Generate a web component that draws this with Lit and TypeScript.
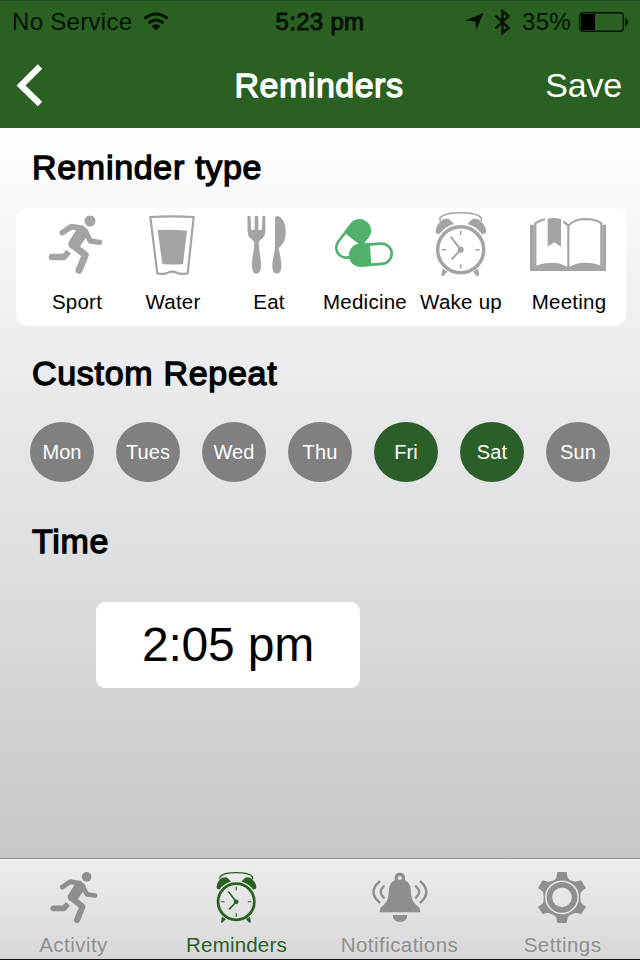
import { LitElement, html, svg, css } from "lit";
import { customElement, state } from "lit/decorators.js";

const runner = svg`
  <circle cx="240" cy="63" r="16.5" fill="currentColor"/>
  <path d="M157 98 L184 80 L216 85" fill="none" stroke="currentColor" stroke-width="17" stroke-linecap="round" stroke-linejoin="round"/>
  <path d="M206 77 Q226 79 235 90 Q238 98 232 107 L211 138 L182 146 Q172 136 176 126 L195 96 Z" fill="currentColor"/>
  <path d="M228 98 L241 123 L269 127" fill="none" stroke="currentColor" stroke-width="16" stroke-linecap="round" stroke-linejoin="round"/>
  <path d="M187 134 L226 165 L207 211" fill="none" stroke="currentColor" stroke-width="21" stroke-linecap="round" stroke-linejoin="round"/>
  <path d="M169 149 L183 161 L172 174 Q168 181 160 181 H126 A10 10 0 0 1 126 161 H156 Q162 160 169 149 Z" fill="currentColor"/>`;

const clock = svg`
  <g fill="none" stroke="currentColor">
    <path d="M75 64 V54 C90 33 184 33 199 54 V64" stroke-width="4.500"/>
    <circle cx="137" cy="149" r="69" stroke-width="10.500"/>
    <path d="M137 92V105M137 193V206M80 149H93M181 149H194" stroke-width="4.500"/>
    <path d="M107 110 L137 149 L110 178" stroke-width="6"/>
  </g>
  <g fill="currentColor">
    <circle cx="137" cy="149" r="9"/>
    <path d="M62 93 Q64 70 85 58 Q98 53 105 60 L117 72 Q91 79 73 102 Q62 103 62 93Z"/>
    <path d="M214 93 Q210 70 189 58 Q176 53 169 60 L157 72 Q183 79 201 102 Q213 103 214 93Z"/>
    <path d="M83 206 L98 215 L84 229 Q77 229 80 220Z M189 206 L174 215 L186 229 Q194 229 192 220Z"/>
  </g>`;

const glass = svg`
  <path d="M421 51 Q486 47 551 51 L533 220 Q512 224 500 218 Q487 212 474 218 Q462 224 442 220 Z" fill="none" stroke="currentColor" stroke-width="6.500" stroke-linejoin="round"/>
  <path d="M443 90 Q487 88 531 92 L519 192 Q487 195 457 192 Z" fill="currentColor"/>`;

const cutlery = svg`
  <path fill="currentColor" d="M97 52 Q97 47 102 47 Q106 47 107 52 L108 89 H119 V52 Q119 47 124.500 47 Q130 47 130 52 V89 H141 L142 52 Q142 47 147 47 Q151 47 151 52 V96 Q151 107 143 115 Q132 122 131 128 C132 154 138 172 138 199 Q138 221 124 221 Q111 221 111 199 C111 172 117 154 118 128 Q116 121 106 115 Q98 108 98 96 Z"/>
  <path fill="currentColor" d="M180 53 Q181 48 187 48 C202 51 213 70 212 98 C212 121 203 133 191 144 C195 165 199 179 199 199 Q199 221 185 221 Q172 221 172 199 C172 181 178 163 180 141 Z"/>`;

const pills = svg`
  <g transform="rotate(38 414 117)">
    <rect x="384" y="55" width="60" height="125" rx="30" fill="#fff" stroke="currentColor" stroke-width="8"/>
    <path d="M380 118 V85 A34 34 0 0 1 448 85 V118 Z" fill="currentColor"/>
  </g>
  <g transform="rotate(-4 468 164)">
    <rect x="406" y="133" width="124" height="61" rx="30" fill="#fff" stroke="currentColor" stroke-width="8"/>
    <path d="M467 129 H436 A34.500 34.500 0 0 0 436 198 H467 Z" fill="currentColor"/>
  </g>`;

const book = svg`
  <path fill="currentColor" d="M345 74 H358 V200 H562 V74 H573 V213 H345 Z"/>
  <path d="M361 201 V70 Q374 60 390 58 M445 65 Q455 70 460 78 Q475 58 511 57 Q542 57 559 70 V201 M460 76 V206" fill="none" stroke="currentColor" stroke-width="6.500"/>
  <path fill="currentColor" d="M360 198 Q385 188 412 188 Q438 188 460 203 Q482 188 509 188 Q538 188 562 198 V211 H360 Z"/>
  <path fill="currentColor" d="M398 56 Q418 52 438 57 V140 L418 127 L398 140 Z"/>`;

const bell = svg`
  <path fill="currentColor" fill-rule="evenodd" d="M223 106 V98 A15.500 15.500 0 0 1 254 98 V106 Q270 113 271 133 C272 165 280 176 297 188 Q300 191 300 202 H178 Q178 191 181 188 C198 176 205 165 206 133 Q207 113 223 106 Z M238.500 93 A6 6 0 1 0 238.500 105 A6 6 0 1 0 238.500 93 Z"/>
  <path fill="currentColor" d="M217 210 H261 Q260 231 239 231 Q218 231 217 210 Z"/>
  <path d="M177 110 Q142 141 177 172 M190 124 Q172 141 190 158 M301 110 Q335 141 301 172 M287 124 Q306 141 287 158" fill="none" stroke="currentColor" stroke-width="7.500" stroke-linecap="round"/>`;

const gear = svg`
  <path fill="currentColor" d="M712 81 H740 L743 98 Q748 106 757 108 L766 110 Q772 109 783 106 L798 130 Q785 136 782 144 Q780 158 782 171 Q785 178 798 185 L783 208 Q772 203 765 204 L755 208 Q745 212 743 218 L740 234 H712 L709 218 Q705 211 696 208 L686 204 Q680 203 668 208 L654 185 Q668 178 670 171 Q672 158 670 144 Q668 136 654 130 L668 106 Q680 110 686 110 L696 108 Q706 106 709 98 Z"/>
  <circle cx="726" cy="157" r="48.500" fill="none" stroke="#e7e7e8" stroke-width="4.500"/>
  <circle cx="726" cy="157" r="29.500" fill="#e6e6e7"/>`;

@customElement("app-root")
export class AppRoot extends LitElement {
  @state() private kind = "Medicine";
  @state() private days = new Set(["Fri", "Sat"]);

  private kinds = [
    { name: "Sport", art: runner, box: "57 24 288 240" },
    { name: "Water", art: glass, box: "345 24 288 240" },
    { name: "Eat", art: cutlery, box: "18 24 288 240" },
    { name: "Medicine", art: pills, box: "306 24 288 240" },
    { name: "Wake up", art: clock, box: "-6 24 288 240" },
    { name: "Meeting", art: book, box: "282 24 360 240" },
  ];

  private tabs = [
    { name: "Activity", art: runner, box: "94 43 205.500 192", cls: "" },
    { name: "Reminders", art: clock, box: "26 32 228 213", cls: "on" },
    { name: "Notifications", art: bell, box: "149 78 180 168", cls: "" },
    { name: "Settings", art: gear, box: "639 78 180 168", cls: "" },
  ];

  static styles = css`
    :host {
      display: flex;
      flex-direction: column;
      width: 640px;
      height: 960px;
      overflow: hidden;
      font-family: "Liberation Sans", Arial, sans-serif;
      color: #000;
      background: linear-gradient(#fff 128px, #f8f8f9 205px, #e9e9eb 400px, #dddee0 570px, #c6c7c9 857px);
    }
    * { box-sizing: border-box; }
    button { font: inherit; color: inherit; border: 0; padding: 0; margin: 0; background: none; }
    svg { display: block; flex: none; }
    header { height: 128px; background: #2a6022; border-top: 1px solid #1d4c19; flex: none; }
    .status { height: 41px; display: grid; grid-template-columns: 1fr auto 1fr; align-items: center; padding: 0 12px 0 12px; font-size: 24px; line-height: 40px; color: #061204; }
    .left { display: flex; align-items: center; gap: 11px; letter-spacing: 0.300px; }
    .clock { letter-spacing: 0.3px; -webkit-text-stroke: 0.9px; }
    .right { display: flex; align-items: center; justify-content: flex-end; }
    .loc { margin-right: 10px; }
    .bt { margin-right: 11px; }
    .pct { margin-right: 8px; letter-spacing: 0.300px; }
    .nav { height: 84px; display: grid; grid-template-columns: 1fr auto 1fr; align-items: center; padding: 0 18px 0 16px; color: #fff; font-size: 34px; line-height: 84px; }
    .title { -webkit-text-stroke: 1.300px; letter-spacing: 0.5px; font-weight: 400; margin: 0; font-size: 34px; }
    .save { justify-self: end; font-size: 34px; letter-spacing: -0.200px; line-height: 86px; }
    main { height: 731px; flex: none; display: flex; flex-direction: column; align-items: flex-start; border-bottom: 1px solid #8f9092; }
    h2 { margin: 0; padding-left: 32px; font-weight: 400; font-size: 34px; letter-spacing: 0.700px; -webkit-text-stroke: 1.300px; line-height: 78px; height: 80px; }
    .card { width: 610px; height: 118px; margin-left: 16px; padding-left: 13px; border-radius: 11px; background: #fff; display: grid; grid-template-columns: repeat(5, 96px) 120px; }
    .kind { display: flex; flex-direction: column; align-items: center; color: #a5a3a4; }
    .kind svg { height: 80px; }
    .kind.on { color: #52b06d; }
    .label { color: #000; font-size: 20.500px; letter-spacing: 0.250px; line-height: 28px; white-space: nowrap; }
    .repeat { height: 96px; line-height: 94px; }
    .days { display: flex; gap: 22px; padding-left: 30px; }
    .day { width: 64px; height: 60px; border-radius: 50%; background: #808080; color: #fff; font-size: 20px; line-height: 60px; text-align: center; letter-spacing: 0.100px; }
    .day.on { background: #2b5f29; }
    .time { height: 120px; line-height: 119px; }
    .picker { width: 264px; height: 86px; margin-left: 96px; border-radius: 9px; background: #fff; font-size: 48px; line-height: 86px; text-align: center; letter-spacing: -0.200px; }
    nav { height: 101px; flex: none; display: flex; margin: 0 -8px; background: linear-gradient(#f6f6f6 0, #ececec 3px, #d8d8da 100%); border-bottom: 1px solid #111; }
    .tab { width: 163px; flex: none; display: flex; flex-direction: column; align-items: center; padding-top: 12px; color: #8f8f8f; font-size: 20.500px; line-height: 36px; letter-spacing: 0.450px; }
    .tab.on { color: #2a6022; letter-spacing: 0.200px; }
  `;

  private toggle(d: string) {
    const next = new Set(this.days);
    next.has(d) ? next.delete(d) : next.add(d);
    this.days = next;
  }

  render() {
    return html`
      <header>
        <div class="status">
          <div class="left">
            <span>No Service</span>
            <svg width="26" height="22" viewBox="0 0 26 20">
              <g fill="none" stroke="#061204" stroke-width="3"><path d="M1.500 6.500 Q13 -2.500 24.500 6.500"/><path d="M5.500 11 Q13 5 20.500 11"/></g>
              <path d="M8.500 14 Q13 10.500 17.500 14 L13 18.500Z" fill="#061204"/>
            </svg>
          </div>
          <span class="clock">5:23 pm</span>
          <div class="right">
            <svg class="loc" width="19" height="18" viewBox="0 0 19 18"><path d="M18.500 0 L11 17.500 L10.500 8.500 L0 7.500 Z" fill="#061204"/></svg>
            <svg class="bt" width="17" height="28" viewBox="0 0 16 28"><path d="M1 7.500 L14 20 L8 25 V3 L14 8 L1 20.500" fill="none" stroke="#061204" stroke-width="2.400"/></svg>
            <span class="pct">35%</span>
            <svg width="49" height="20" viewBox="0 0 49 20"><rect x="0.750" y="0.750" width="43.500" height="18.500" rx="3" fill="none" stroke="#061204" stroke-width="1.300"/><path d="M2 2H16V18H2Z" fill="#000"/><path d="M46 6 Q49 7 49 10 Q49 13 46 14Z" fill="#061204"/></svg>
          </div>
        </div>
        <div class="nav">
          <svg width="28" height="44" viewBox="0 0 28 44"><path d="M24 3.500 L5 22.500 L24 41" fill="none" stroke="#fff" stroke-width="6.300"/></svg>
          <h1 class="title">Reminders</h1>
          <button class="save">Save</button>
        </div>
      </header>
      <main>
        <h2>Reminder type</h2>
        <div class="card">
          ${this.kinds.map((k) => html`
            <button class="kind ${k.name === this.kind ? "on" : ""}" @click=${() => (this.kind = k.name)}>
              <svg viewBox=${k.box}>${k.art}</svg>
              <span class="label">${k.name}</span>
            </button>`)}
        </div>
        <h2 class="repeat">Custom Repeat</h2>
        <div class="days">
          ${["Mon", "Tues", "Wed", "Thu", "Fri", "Sat", "Sun"].map((d) => html`
            <button class="day ${this.days.has(d) ? "on" : ""}" @click=${() => this.toggle(d)}>${d}</button>`)}
        </div>
        <h2 class="time">Time</h2>
        <button class="picker">2:05 pm</button>
      </main>
      <nav>
        ${this.tabs.map((t) => html`
          <button class="tab ${t.cls}">
            <svg width="60" height="56" viewBox=${t.box}>${t.art}</svg>
            <span>${t.name}</span>
          </button>`)}
      </nav>`;
  }
}
